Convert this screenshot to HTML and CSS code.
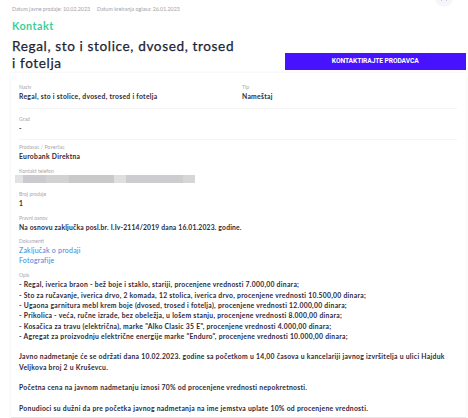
FILE: index.html
```
<!DOCTYPE html>
<html lang="sr">
<head>
<meta charset="utf-8">
<title>Oglas</title>
<link rel="stylesheet" href="styles.css">
</head>
<body>
<header class="head">
  <div class="share"><svg viewBox="0 0 20 20"><circle cx="10" cy="10" r="9.5" fill="#f5f5fb"/><path d="M7.5 12.3v1.2M12.5 12.3v1.2" stroke="#a5a5b8" stroke-width="1"/></svg></div>
  <div class="dates"><span>Datum javne prodaje: 10.02.2023</span><span>Datum kreiranja oglasa: 26.01.2023</span></div>
  <div class="status">Kontakt</div>
  <div class="title-row">
    <h1>Regal, sto i stolice, dvosed, trosed<br>i fotelja</h1>
    <button class="cta">KONTAKTIRAJTE PRODAVCA</button>
  </div>
</header>
<main class="card">
  <section class="row top">
    <div><div class="label">Naziv</div><div class="value name">Regal, sto i stolice, dvosed, trosed i fotelja</div></div>
    <div><div class="label">Tip</div><div class="value">Nameštaj</div></div>
  </section>
  <section class="row city"><div><div class="label">Grad</div><div class="value">-</div></div></section>
  <section class="details">
    <div class="field"><div class="label">Prodavac / Poverilac</div><div class="value bank">Eurobank Direktna</div></div>
    <div class="field"><div class="label">Kontakt telefon</div><div class="redacted"><i></i><i></i><i></i><i></i><i></i><i></i><i></i></div></div>
    <div class="field"><div class="label">Broj prodaje</div><div class="value">1</div></div>
    <div class="field"><div class="label">Pravni osnov</div><div class="value basis">Na osnovu zaključka posl.br. I.Iv-2114/2019 dana 16.01.2023. godine.</div></div>
    <div class="field docs"><div class="label">Dokumenti</div><a>Zaključak o prodaji</a><a>Fotografije</a></div>
    <div class="field"><div class="label">Opis</div>
      <div class="text">
        <p>- Regal, iverica braon - bež boje i staklo, stariji, procenjene vrednosti 7.000,00 dinara;</p>
        <p>- Sto za ručavanje, iverica drvo, 2 komada, 12 stolica, iverica drvo, procenjene vrednosti 10.500,00 dinara;</p>
        <p>- Ugaona garnitura mebl krem boje (dvosed, trosed i fotelja), procenjene vrednosti 12.000,00 dinara;</p>
        <p>- Prikolica - veća, ručne izrade, bez obeležja, u lošem stanju, procenjene vrednosti 8.000,00 dinara;</p>
        <p>- Kosačica za travu (električna), marke "Alko Clasic 35 E", procenjene vrednosti 4.000,00 dinara;</p>
        <p>- Agregat za proizvodnju električne energije marke "Enduro", procenjene vrednosti 10.000,00 dinara;</p>
        <p class="gap">Javno nadmetanje će se održati dana 10.02.2023. godine sa početkom u 14,00 časova u kancelariji javnog izvršitelja u ulici Hajduk</p>
        <p>Veljkova broj 2 u Kruševcu.</p>
        <p class="gap">Početna cena na javnom nadmetanju iznosi 70% od procenjene vrednosti nepokretnosti.</p>
        <p class="gap">Ponudioci su dužni da pre početka javnog nadmetanja na ime jemstva uplate 10% od procenjene vrednosti.</p>
      </div>
    </div>
  </section>
</main>
</body>
</html>
```
FILE: styles.css
```
* { box-sizing: border-box; }
body { margin: 0; width: 468px; height: 418px; overflow: hidden; background: #fff; font-family: Lato, "Open Sans", sans-serif; color: #2c2a3a; }
.head { height: 73px; padding: 4px 2px 0 12px; position: relative; }
.share { position: absolute; left: 434px; top: -13px; width: 20px; height: 20px; }
.share svg { display: block; width: 20px; height: 20px; }
.dates { display: flex; gap: 7px; height: 11px; line-height: 11px; font-size: 5.3px; color: #a3a3aa; white-space: nowrap; }
.status { height: 22px; line-height: 22px; font-size: 10.8px; font-weight: 700; letter-spacing: .45px; color: #3ecf98; }
.title-row { display: flex; justify-content: space-between; }
h1 { margin: 1px 0 0; font-size: 13.6px; line-height: 17px; font-weight: 400; -webkit-text-stroke: .25px #211f35; letter-spacing: .62px; color: #211f35; white-space: nowrap; }
.cta { width: 181.5px; height: 17px; margin: 16px 0 0; padding: 0; border: 0; background: #4713ff; color: #fff; font: 700 6.7px/17px Roboto, sans-serif; letter-spacing: -.1px; }
.card { margin: 0 2px 0 11px; height: 345px; padding: 0 9px 0 8px; border-bottom: 1px solid #e6e6e6; box-shadow: 0 0 3px rgba(0,0,0,.07); background: #fff; }
.row { display: grid; grid-template-columns: 223px 1fr; border-bottom: 1px solid #f5f5f5; }
.top { height: 36px; padding-top: 10px; }
.city { height: 31px; padding-top: 6px; }
.label { height: 8px; line-height: 8px; font-size: 5.1px; color: #a7a7ad; white-space: nowrap; }
.value { height: 10px; line-height: 10px; font-size: 6.75px; font-weight: 700; letter-spacing: .29px; white-space: nowrap; }
.details { padding-top: 3px; }
.field { height: 23.6px; }
.redacted { display: flex; width: 180px; height: 8px; margin: 0 0 0 -4px; background: #d2d2d4; }
.redacted i { flex: 1 1 30px; background: #d2d2d3; }
.redacted i:nth-child(1) { flex: 0 0 8px; background: #e2e2e3; }
.redacted i:nth-child(2) { background: #cbcbcf; }
.redacted i:nth-child(4) { flex: 0 0 45px; background: #c9c9ca; }
.redacted i:nth-child(5) { flex: 0 0 12px; background: #dfdfe0; }
.redacted i:nth-child(6) { flex: 0 0 57px; background: #cdcdcf; }
.redacted i:nth-child(7) { flex: 0 0 12px; background: #d6d6d7; }
.name { letter-spacing: .3px; }
.bank { letter-spacing: .29px; }
.basis { letter-spacing: .19px; }
.docs { height: 34px; }
.docs a { display: block; height: 10px; line-height: 10px; font-size: 7px; letter-spacing: .22px; color: #4184d8; }
.text { font-size: 6.8px; line-height: 10.28px; font-weight: 700; letter-spacing: .28px; white-space: nowrap; }
.text p { margin: 0; }
.text .gap { margin-top: 10.28px; }
```
